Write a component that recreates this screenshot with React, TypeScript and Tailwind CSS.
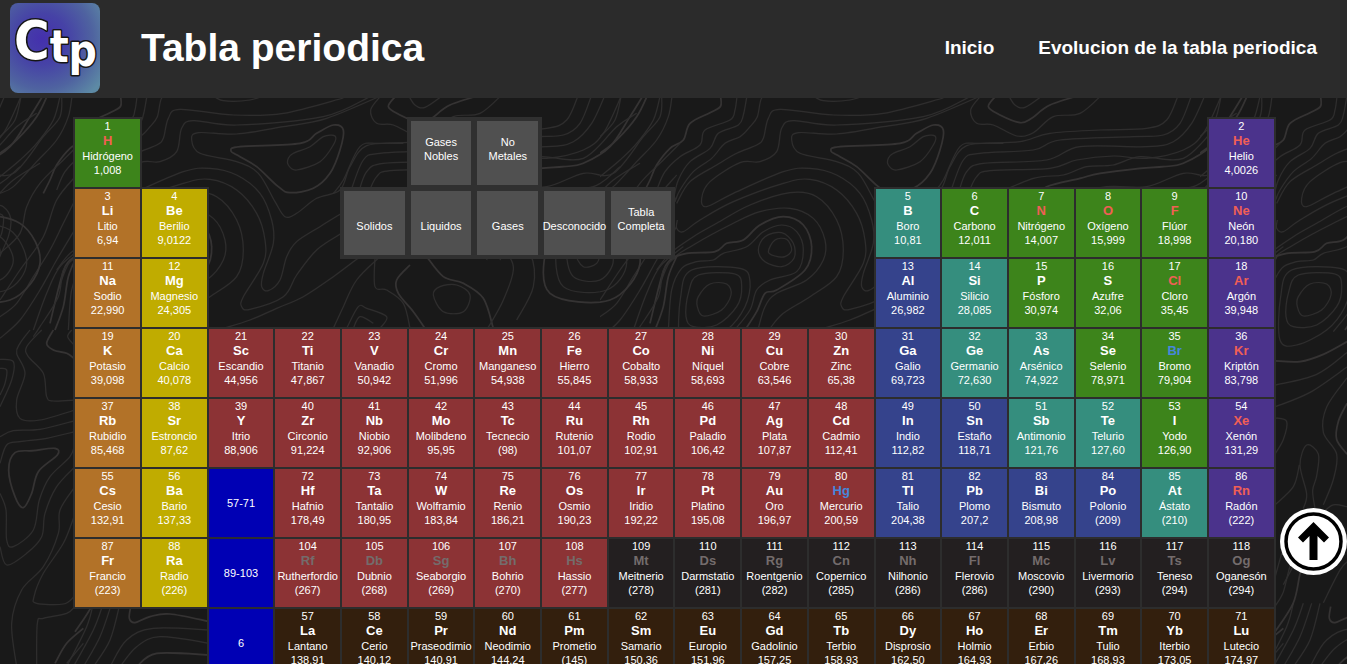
import React from "react";

type Kind =
  | "nonmetal"
  | "alkali"
  | "alkaline"
  | "transition"
  | "metal"
  | "metalloid"
  | "noble"
  | "unknown"
  | "lanthanide";

type State = "solid" | "gas" | "liquid" | "synthetic";

const kindClass: Record<Kind, string> = {
  nonmetal: "bg-[#3d841b]",
  alkali: "bg-[#b27228]",
  alkaline: "bg-[#c0ac00]",
  transition: "bg-[#8c3335]",
  metal: "bg-[#35438c]",
  metalloid: "bg-[#358e7e]",
  noble: "bg-[#4b338c]",
  unknown: "bg-[#231f20]",
  lanthanide: "bg-[#331f0d]",
};

const stateClass: Record<State, string> = {
  solid: "text-white",
  gas: "text-[#f15f55]",
  liquid: "text-[#4687dc]",
  synthetic: "text-[#746c6c]",
};

interface ElementCell {
  n: number;
  symbol: string;
  name: string;
  mass: string;
  kind: Kind;
  state: State;
}

type Cell =
  | { type: "element"; element: ElementCell }
  | { type: "gap"; span: number }
  | { type: "filter"; label: string }
  | { type: "range"; label: string };

const kinds: Record<string, Kind> = {
  n: "nonmetal",
  a: "alkali",
  e: "alkaline",
  t: "transition",
  m: "metal",
  d: "metalloid",
  g: "noble",
  u: "unknown",
  l: "lanthanide",
};

const states: Record<string, State> = { s: "solid", g: "gas", l: "liquid", x: "synthetic" };

// "number symbol name mass kind+state", one element per entry
const parse = (list: string): Cell[] =>
  list.split("|").map((entry) => {
    const [n, symbol, name, mass, flags] = entry.trim().split(" ");
    return {
      type: "element",
      element: { n: Number(n), symbol, name, mass, kind: kinds[flags[0]], state: states[flags[1]] },
    };
  });

const gap = (span: number): Cell => ({ type: "gap", span });
const filter = (label: string): Cell => ({ type: "filter", label });
const range = (label: string): Cell => ({ type: "range", label });

const rows: Cell[][] = [
  [
    ...parse("1 H Hidrógeno 1,008 ng"),
    gap(4),
    filter("Gases Nobles"),
    filter("No Metales"),
    gap(10),
    ...parse("2 He Helio 4,0026 gg"),
  ],
  [
    ...parse("3 Li Litio 6,94 as|4 Be Berilio 9,0122 es"),
    gap(2),
    filter("Solidos"),
    filter("Liquidos"),
    filter("Gases"),
    filter("Desconocido"),
    filter("Tabla Completa"),
    gap(3),
    ...parse(
      "5 B Boro 10,81 ds|6 C Carbono 12,011 ns|7 N Nitrógeno 14,007 ng|8 O Oxígeno 15,999 ng|9 F Flúor 18,998 ng|10 Ne Neón 20,180 gg"
    ),
  ],
  [
    ...parse("11 Na Sodio 22,990 as|12 Mg Magnesio 24,305 es"),
    gap(10),
    ...parse(
      "13 Al Aluminio 26,982 ms|14 Si Silicio 28,085 ds|15 P Fósforo 30,974 ns|16 S Azufre 32,06 ns|17 Cl Cloro 35,45 ng|18 Ar Argón 39,948 gg"
    ),
  ],
  parse(
    "19 K Potasio 39,098 as|20 Ca Calcio 40,078 es|21 Sc Escandio 44,956 ts|22 Ti Titanio 47,867 ts|23 V Vanadio 50,942 ts|24 Cr Cromo 51,996 ts|25 Mn Manganeso 54,938 ts|26 Fe Hierro 55,845 ts|27 Co Cobalto 58,933 ts|28 Ni Níquel 58,693 ts|29 Cu Cobre 63,546 ts|30 Zn Zinc 65,38 ts|31 Ga Galio 69,723 ms|32 Ge Germanio 72,630 ds|33 As Arsénico 74,922 ds|34 Se Selenio 78,971 ns|35 Br Bromo 79,904 nl|36 Kr Kriptón 83,798 gg"
  ),
  parse(
    "37 Rb Rubidio 85,468 as|38 Sr Estroncio 87,62 es|39 Y Itrio 88,906 ts|40 Zr Circonio 91,224 ts|41 Nb Niobio 92,906 ts|42 Mo Molibdeno 95,95 ts|43 Tc Tecnecio (98) ts|44 Ru Rutenio 101,07 ts|45 Rh Rodio 102,91 ts|46 Pd Paladio 106,42 ts|47 Ag Plata 107,87 ts|48 Cd Cadmio 112,41 ts|49 In Indio 112,82 ms|50 Sn Estaño 118,71 ms|51 Sb Antimonio 121,76 ds|52 Te Telurio 127,60 ds|53 I Yodo 126,90 ns|54 Xe Xenón 131,29 gg"
  ),
  [
    ...parse("55 Cs Cesio 132,91 as|56 Ba Bario 137,33 es"),
    range("57-71"),
    ...parse(
      "72 Hf Hafnio 178,49 ts|73 Ta Tantalio 180,95 ts|74 W Wolframio 183,84 ts|75 Re Renio 186,21 ts|76 Os Osmio 190,23 ts|77 Ir Iridio 192,22 ts|78 Pt Platino 195,08 ts|79 Au Oro 196,97 ts|80 Hg Mercurio 200,59 tl|81 Tl Talio 204,38 ms|82 Pb Plomo 207,2 ms|83 Bi Bismuto 208,98 ms|84 Po Polonio (209) ms|85 At Ástato (210) ds|86 Rn Radón (222) gg"
    ),
  ],
  [
    ...parse("87 Fr Francio (223) as|88 Ra Radio (226) es"),
    range("89-103"),
    ...parse(
      "104 Rf Rutherfordio (267) tx|105 Db Dubnio (268) tx|106 Sg Seaborgio (269) tx|107 Bh Bohrio (270) tx|108 Hs Hassio (277) tx|109 Mt Meitnerio (278) ux|110 Ds Darmstatio (281) ux|111 Rg Roentgenio (282) ux|112 Cn Copernico (285) ux|113 Nh Nilhonio (286) ux|114 Fl Flerovio (286) ux|115 Mc Moscovio (290) ux|116 Lv Livermorio (293) ux|117 Ts Teneso (294) ux|118 Og Oganesón (294) ux"
    ),
  ],
  [
    gap(2),
    range("6"),
    ...parse(
      "57 La Lantano 138,91 ls|58 Ce Cerio 140,12 ls|59 Pr Praseodimio 140,91 ls|60 Nd Neodimio 144,24 ls|61 Pm Prometio (145) ls|62 Sm Samario 150,36 ls|63 Eu Europio 151,96 ls|64 Gd Gadolinio 157,25 ls|65 Tb Terbio 158,93 ls|66 Dy Disprosio 162,50 ls|67 Ho Holmio 164,93 ls|68 Er Erbio 167,26 ls|69 Tm Tulio 168,93 ls|70 Yb Iterbio 173,05 ls|71 Lu Lutecio 174,97 ls"
    ),
  ],
];

/* ---------- contour-line backdrop ---------- */

interface Sheet {
  x: number;
  y: number;
  sx: number;
  sy: number;
  // prefix "*" = heavy line, suffix "z" = closed ring
  lines: string[];
}

const sheets: Sheet[] = [
  {
    x: 50,
    y: 90,
    sx: 3,
    sy: 3,
    lines: [
      "*210,10 212,48 180,68 120,100 100,150 60,175 20,225 0,270 -20,310",
      "262,10 255,60 240,90 165,120 150,165 90,200 45,245 20,300",
      "292,10 280,75 265,105 205,130 180,175 120,215 85,270 70,330",
      "365,10 335,24 322,80 300,110 270,140 225,160 185,205 130,245 90,300 75,335",
      "480,10 520,32 600,30 660,10",
      "880,24 700,70 550,75 390,58 355,85 340,145 320,165 260,190 200,225 120,275 80,340",
      "960,20 820,80 560,105 430,92 395,115 380,185 330,215 270,218 180,275 155,325 170,350 250,310 400,245 480,235 560,255 630,310 665,390 670,460 640,550 635,590 655,602 690,570 710,500 740,455 810,410 875,370",
      "82,390 80,415 100,425 150,390 250,335 400,280 480,268 560,300 620,370 645,450 640,520 580,620 575,650 600,658 700,620 740,555 800,480 875,430",
      "20,540 60,490 130,440 200,400 300,345 420,308 500,320 560,390 580,480 560,560 480,620 400,670 360,715",
      "25,600 60,515 130,465 250,400 330,365 420,355 490,385 525,450 520,510 470,570 380,610 345,650 325,715",
      "*0,700 35,560 60,510 110,490 195,485 230,460 280,450 330,405 400,380 460,405 485,470 465,540 380,600 345,610 320,665 285,720",
      "55,720 65,600 95,535 140,515 190,510 220,490 290,470 340,425 395,405 440,425 460,480 440,545 360,570 320,600 300,660 250,725",
      "325,480 345,440 395,428 430,460 432,505 395,530 345,515z",
      "355,485 375,450 410,448 425,480 405,500 375,498z",
      "145,620 180,582 230,582 243,615 215,660 160,678 142,650z",
      "115,610 145,555 255,552 275,590 260,650 200,705 130,710 108,680z",
      "92,620 125,540 270,535 300,575 285,650 230,720 140,765 90,750z",
      "*543,183 570,170 750,160 800,130 850,105 880,120 870,180 840,250 790,295 720,308 685,290 620,230 570,200z",
      "715,205 730,190 780,170 820,140 855,138 850,165 810,215 740,240 715,225z",
      "1010,10 830,85 700,110 560,132 445,128 425,150 450,190 560,215 625,250 675,335 705,380 740,370 800,325 870,300 900,230 950,167 1060,160",
      "520,715 600,690 680,655 760,620 850,560 930,500",
      "850,715 880,650 920,570 990,500",
      "890,715 925,650 950,655 1010,680 990,715",
      "910,715 930,680 970,700",
      "975,500 975,590 1010,600 1060,640 1080,715",
      "*1080,525 1040,570 1045,610 1090,665 1125,715",
      "1150,615 1170,590 1220,585 1260,615 1240,665 1180,665z",
      "*1130,500 1180,560 1240,580 1300,625 1330,715",
    ],
  },
  {
    x: 300,
    y: 0,
    sx: 3,
    sy: 3,
    lines: [
      "*290,285 265,320 300,345 360,368 395,355 450,315 560,280",
      "245,285 212,330 230,370 280,375 350,408 400,398 460,350 540,340 610,280",
      "325,285 345,315 375,322 430,285",
      "100,580 130,540 180,440 240,430 360,425 450,400 600,390 740,385 800,360 835,285",
      "150,580 190,480 240,460 400,450 480,420 700,410 790,405 840,370 875,285",
      "175,580 200,515 250,490 440,480 540,440 740,440 820,425 875,370 915,285",
      "205,580 230,530 270,512 450,505 530,480 640,468 740,475 850,450 910,400 965,285",
      "*410,590 440,560 540,535 600,520 720,505 790,500 850,490 930,440 990,350 1030,285",
      "270,590 400,535 490,525 560,500 640,495 720,470 850,475 950,380 1010,340",
      "480,590 620,560 740,560 850,520 940,520 1030,410 1080,350 1085,285",
      "560,780 590,700 670,640 740,570 880,560 960,500",
      "600,780 640,710 740,640 850,620 940,540 1020,490",
      "830,760 850,800 890,790 900,750 880,735z",
      "800,750 820,830 900,840 940,780 900,710 830,710z",
      "770,740 790,860 920,870 980,790 930,690 820,680z",
      "*740,740 750,880 930,900 1020,790 960,670 800,650z",
      "500,640 620,690 690,760 700,860 650,960",
      "460,680 590,740 640,800 610,900 560,990",
      "1000,990 1040,880 1080,800 1150,740",
    ],
  },
  {
    x: 0,
    y: 90,
    sx: 3,
    sy: 3,
    lines: [
      "65,10 45,90 0,140",
      "*145,10 110,80 50,150 0,190",
      "182,10 160,90 110,160 60,210 0,260",
      "217,10 205,80 170,150 110,215 40,290 0,310",
      "240,160 190,210 120,280 80,350 60,430 0,490",
      "-20,345 10,350 32,385 25,440 -20,540",
      "-10,370 10,380 5,430 -10,455",
      "230,255 170,330 130,440 60,540 0,630",
      "230,320 190,400 150,480 100,560 50,640 0,680",
      "230,410 170,510 120,600 60,690 0,745",
      "230,500 190,540 175,620 120,710 100,740",
      "*230,500 205,560 190,650 165,720",
    ],
  },
  {
    x: 0,
    y: 330,
    sx: 3,
    sy: 3,
    lines: [
      "90,0 60,40 50,70 75,130 50,210 60,265 120,270 225,240",
      "125,0 80,50 85,80 130,130 140,200 160,213 225,210",
      "*160,0 140,40 160,60 200,70 222,85",
      "215,0 203,20 222,45",
      "0,88 40,95 35,150 0,230",
      "0,115 20,120 15,160 0,195",
      "0,320 40,302 120,298 225,272",
      "0,400 20,345 60,335 140,325 225,305",
      "*26,420 45,368 100,362 165,355 172,375 115,425 95,490 70,533 45,500z",
      "0,490 18,540 20,630 40,650 100,600 118,510 150,440 210,380 225,340",
      "0,650 20,705 80,670 125,620 135,550 170,470 225,410",
      "50,1010 35,880 65,780 130,710 175,610 180,540 225,470",
      "110,1010 112,880 130,865 200,850 225,830",
      "222,560 190,640 130,730 102,800 110,820 190,822 222,800",
      "*165,1000 200,940 250,895",
      "200,1000 250,940",
    ],
  },
  {
    x: 60,
    y: 440,
    sx: 3,
    sy: 3,
    lines: [
      "100,490 80,560 20,680",
      "130,490 100,570 40,680",
      "155,490 120,590 70,680",
      "180,490 150,600 100,680",
      "*212,500 208,535 225,548 270,530 330,522 450,545",
      "150,680 200,600 280,565 450,570",
      "180,680 230,620 300,590 450,610",
      "*230,680 290,640 450,645",
    ],
  },
  {
    x: 0,
    y: 95,
    sx: 3,
    sy: 2.757,
    lines: [
      "*225,733 300,735 370,715 441,680",
      "225,800 350,770 441,710",
      "225,860 330,820 441,750",
      "225,890 260,900 250,950 225,990",
      "441,780 380,860 370,930 410,990 400,1060 370,1130",
      "*441,850 415,900 410,950 441,990",
      "310,1140 320,1100 300,1020 320,965 355,990 350,1050 338,1090 345,1140",
      "225,1130 280,1080 298,1020",
      "441,1135 400,1130 370,1150",
      "225,1330 250,1250 290,1150",
      "225,1410 250,1370 270,1300 300,1240",
      "*225,1480 280,1400 300,1320 320,1250",
      "250,1350 320,1230",
      "370,1400 420,1310 450,1280",
    ],
  },
];

function toPath(line: string) {
  const closed = line.endsWith("z");
  const pts = line
    .replace(/[*z]/g, "")
    .split(" ")
    .map((p) => p.split(",").map(Number));
  const count = pts.length;
  const at = (i: number) =>
    closed ? pts[(i + count) % count] : pts[Math.max(0, Math.min(count - 1, i))];
  let d = `M${pts[0][0]} ${pts[0][1]}`;
  for (let i = 0; i < (closed ? count : count - 1); i++) {
    const [a, b, c, e] = [at(i - 1), at(i), at(i + 1), at(i + 2)];
    d += `C${b[0] + (c[0] - a[0]) / 6} ${b[1] + (c[1] - a[1]) / 6} ${c[0] - (e[0] - b[0]) / 6} ${
      c[1] - (e[1] - b[1]) / 6
    } ${c[0]} ${c[1]}`;
  }
  return d;
}

function Contours() {
  return (
    <svg className="absolute inset-0 h-full w-full" aria-hidden="true">
      <defs>
        <pattern id="contours" width="600" height="700" patternUnits="userSpaceOnUse">
          <g id="contour-lines" fill="none">
            {sheets.map((s, i) => (
              <g key={i} transform={`translate(${s.x} ${s.y}) scale(${1 / s.sx} ${1 / s.sy})`}>
                {s.lines.map((line) => (
                  <path
                    key={line}
                    d={toPath(line)}
                    stroke={line.startsWith("*") ? "#353333" : "#2e2d2d"}
                    strokeWidth={line.startsWith("*") ? 5 : 3.6}
                  />
                ))}
              </g>
            ))}
          </g>
          <use href="#contour-lines" x="-600" />
        </pattern>
      </defs>
      <rect width="100%" height="100%" fill="url(#contours)" />
    </svg>
  );
}

function Logo() {
  return (
    <svg viewBox="0 0 90 90" className="size-[90px] shrink-0 rounded-lg" role="img" aria-label="Ctp">
      <defs>
        <radialGradient id="logo-bg" cx="0.36" cy="0.4" r="0.8">
          <stop offset="0" stopColor="#4430ad" />
          <stop offset="0.35" stopColor="#4642a6" />
          <stop offset="0.7" stopColor="#4f63a0" />
          <stop offset="1" stopColor="#5d8aa5" />
        </radialGradient>
      </defs>
      <rect width="90" height="90" fill="url(#logo-bg)" />
      <text
        x="4"
        y="56"
        fontFamily="'DejaVu Sans Condensed', 'DejaVu Sans', sans-serif"
        fontWeight="700"
        fill="#fff"
        stroke="#161616"
        strokeWidth="3"
        strokeLinejoin="round"
        paintOrder="stroke"
      >
        <tspan fontSize="54">C</tspan>
        <tspan fontSize="44" dy="3">t</tspan>
        <tspan fontSize="44" dy="4">p</tspan>
      </text>
    </svg>
  );
}

function TableCell({ cell }: { cell: Cell }) {
  switch (cell.type) {
    case "gap":
      return <td colSpan={cell.span} />;
    case "filter":
      return (
        <td className="border-2 border-[#303030] p-0">
          <button
            type="button"
            className="flex h-[68px] w-full cursor-pointer items-end justify-center border-2 border-[#303030] bg-[#505050] px-1.5 pb-[22px] text-center"
          >
            {cell.label}
          </button>
        </td>
      );
    case "range":
      return <td className="border-2 border-[#2c2c30] bg-[#0000b4] p-0">{cell.label}</td>;
    case "element": {
      const e = cell.element;
      return (
        <td className={`h-[70px] border-2 border-[#2d2d2d] p-0 align-top ${kindClass[e.kind]}`}>
          <div>{e.n}</div>
          <div className={`text-[13px] leading-4 font-bold ${stateClass[e.state]}`}>{e.symbol}</div>
          <div>{e.name}</div>
          <div>{e.mass}</div>
        </td>
      );
    }
  }
}

export default function App() {
  return (
    <div className="relative min-h-screen bg-[#191919] font-['Liberation_Sans',Arial,sans-serif] text-white">
      <Contours />
      <header className="relative flex items-center bg-[#2b2b2b] pt-[3px] pr-[30px] pb-[5px] pl-[10px]">
        <a href="#inicio">
          <Logo />
        </a>
        <h1 className="ml-[41px] text-[39px] leading-[46px] font-bold">Tabla periodica</h1>
        <nav className="ml-auto flex gap-11 text-[19px] leading-6 font-bold">
          <a href="#inicio">Inicio</a>
          <a href="#evolucion">Evolucion de la tabla periodica</a>
        </nav>
      </header>
      <main className="relative pt-[19px] pl-0.5">
        <table className="mx-auto w-[89.4%] table-fixed border-collapse text-center text-[11px] leading-[14px]">
          <colgroup>
            {Array.from({ length: 18 }, (_, i) => (
              <col key={i} />
            ))}
          </colgroup>
          <tbody>
            {rows.map((row, i) => (
              <tr key={i}>
                {row.map((cell, j) => (
                  <TableCell key={j} cell={cell} />
                ))}
              </tr>
            ))}
          </tbody>
        </table>
      </main>
      <button
        type="button"
        aria-label="Subir"
        className="fixed right-0 bottom-[89px] size-[67px] cursor-pointer rounded-full"
      >
        <svg viewBox="0 0 67 67" className="size-full">
          <circle cx="33.5" cy="33.5" r="33.5" fill="#fff" />
          <circle cx="33.5" cy="33.5" r="27.5" fill="none" stroke="#000" strokeWidth="3.5" />
          <path
            d="M33.5 14 49 29.500 44 34.500 37.500 28V52H29.500V28L23 34.500 18 29.500Z"
            fill="#000"
          />
        </svg>
      </button>
    </div>
  );
}
